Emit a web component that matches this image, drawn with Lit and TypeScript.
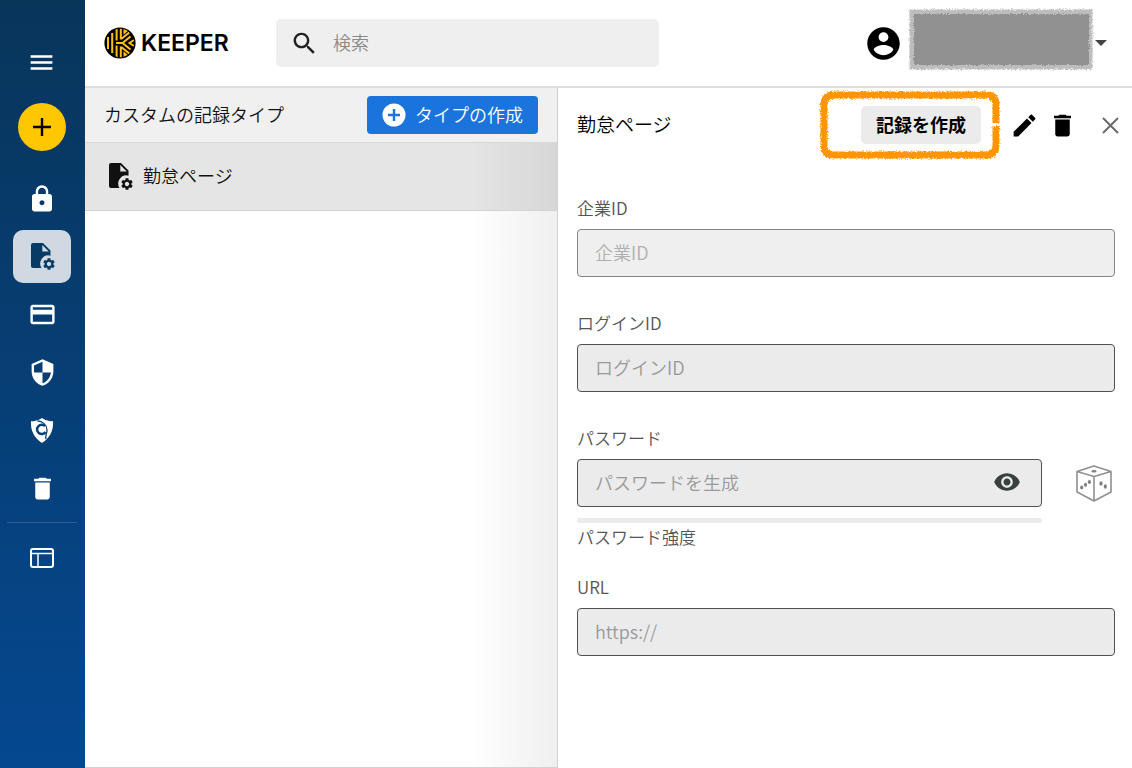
import { LitElement, html, svg, css } from "lit";
import { customElement } from "lit/decorators.js";

const P = {
  menu: "M3 18h18v-2H3v2zm0-5h18v-2H3v2zm0-7v2h18V6H3z",
  lock: "M18 8h-1V6c0-2.76-2.24-5-5-5S7 3.24 7 6v2H6c-1.1 0-2 .9-2 2v10c0 1.1.9 2 2 2h12c1.1 0 2-.9 2-2V10c0-1.1-.9-2-2-2zm-6 9c-1.1 0-2-.9-2-2s.9-2 2-2 2 .9 2 2-.9 2-2 2zm3.1-9H8.9V6c0-1.71 1.39-3.1 3.1-3.1 1.71 0 3.1 1.39 3.1 3.1v2z",
  card: "M20 4H4c-1.11 0-1.99.89-1.99 2L2 18c0 1.11.89 2 2 2h16c1.11 0 2-.89 2-2V6c0-1.11-.89-2-2-2zm0 14H4v-6h16v6zm0-10H4V6h16v2z",
  shield: "M12 1L3 5v6c0 5.55 3.84 10.74 9 12 5.16-1.26 9-6.45 9-12V5l-9-4zm0 10.99h7c-.53 4.12-3.28 7.79-7 8.94V12H5V6.3l7-3.11v8.8z",
  trash: "M6 19c0 1.1.9 2 2 2h8c1.1 0 2-.9 2-2V7H6v12zM19 4h-3.5l-1-1h-5l-1 1H5v2h14V4z",
  account: "M12 2C6.48 2 2 6.48 2 12s4.48 10 10 10 10-4.48 10-10S17.52 2 12 2zm0 3c1.66 0 3 1.34 3 3s-1.34 3-3 3-3-1.34-3-3 1.34-3 3-3zm0 14.2c-2.5 0-4.71-1.28-6-3.22.03-1.99 4-3.08 6-3.08 1.99 0 5.97 1.09 6 3.08-1.29 1.94-3.5 3.22-6 3.22z",
  search: "M15.5 14h-.79l-.28-.27C15.41 12.59 16 11.11 16 9.5 16 5.91 13.09 3 9.5 3S3 5.91 3 9.5 5.91 16 9.5 16c1.61 0 3.09-.59 4.23-1.57l.27.28v.79l5 4.99L20.49 19l-4.99-5zm-6 0C7.01 14 5 11.99 5 9.5S7.01 5 9.5 5 14 7.01 14 9.5 11.99 14 9.5 14z",
  edit: "M3 17.25V21h3.75L17.81 9.94l-3.75-3.75L3 17.25zM20.71 7.04c.39-.39.39-1.02 0-1.41l-2.34-2.34c-.39-.39-1.02-.39-1.41 0l-1.83 1.83 3.75 3.75 1.83-1.83z",
  eye: "M12 4.5C7 4.5 2.73 7.61 1 12c1.73 4.39 6 7.5 11 7.5s9.27-3.11 11-7.5c-1.73-4.39-6-7.5-11-7.5zM12 17c-2.76 0-5-2.24-5-5s2.24-5 5-5 5 2.24 5 5-2.24 5-5 5zm0-8c-1.66 0-3 1.34-3 3s1.34 3 3 3 3-1.34 3-3-1.34-3-3-3z",
  gear: "M19.14 12.94c.04-.3.06-.61.06-.94 0-.32-.02-.64-.07-.94l2.03-1.58c.18-.14.23-.41.12-.61l-1.92-3.32c-.12-.22-.37-.29-.59-.22l-2.39.96c-.5-.38-1.03-.7-1.62-.94l-.36-2.54c-.04-.24-.24-.41-.48-.41h-3.84c-.24 0-.43.17-.47.41l-.36 2.54c-.59.24-1.13.57-1.62.94l-2.39-.96c-.22-.08-.47 0-.59.22L2.74 8.87c-.12.21-.08.47.12.61l2.03 1.58c-.05.3-.09.63-.09.94s.02.64.07.94l-2.03 1.58c-.18.14-.23.41-.12.61l1.92 3.32c.12.22.37.29.59.22l2.39-.96c.5.38 1.03.7 1.62.94l.36 2.54c.05.24.24.41.48.41h3.84c.24 0 .44-.17.47-.41l.36-2.54c.59-.24 1.13-.56 1.62-.94l2.39.96c.22.08.47 0 .59-.22l1.92-3.32c.12-.22.07-.47-.12-.61l-2.01-1.58zM12 15.6c-1.98 0-3.6-1.62-3.6-3.6s1.62-3.6 3.6-3.6 3.6 1.62 3.6 3.6-1.62 3.6-3.6 3.6z",
};

const icon = (d: string, size = 29) =>
  html`<svg width=${size} height=${size} viewBox="0 0 24 24" fill="currentColor" aria-hidden="true"><path d=${d} /></svg>`;

const fileGear = html`<svg width="25" height="27" viewBox="0 0 25 27" fill="currentColor" aria-hidden="true">
  <path fill-rule="evenodd" d="M2 0h10l7.500 7.500v5.200A8.200 8.200 0 0 0 10.500 25H2a2 2 0 0 1-2-2V2a2 2 0 0 1 2-2zM11.300 2v6.500h6.500z" />
  <g transform="translate(10.8 13.8) scale(.6)"><path d=${P.gear} /></g>
</svg>`;

const breach = html`<svg width="24" height="26" viewBox="0 0 24 26" aria-hidden="true">
  <path fill="#fff" d="M1 3q6 1 11-3q5 4 11 3q1 14-11 22Q0 17 1 3z" />
  <g fill="none" stroke="#06407a">
    <path d="M15 8.200A4.600 4.600 0 1 0 15.500 14" stroke-width="2.400" />
    <path d="M7.500 3c5 0 9.500 4 9.500 9c0 4-2 5-1 9" stroke-width="1.300" />
  </g>
</svg>`;

const layoutIcon = html`<svg width="24" height="20" viewBox="0 0 24 20" fill="none" stroke="#fff" stroke-width="2" aria-hidden="true">
  <rect x="1" y="1" width="22" height="18" rx="2" /><path d="M1 5.500h22M8 6v13" stroke-width="1.500" />
</svg>`;

const emblem = html`<svg class="emblem" width="32" height="32" viewBox="0 0 32 32" aria-hidden="true">
  <defs><clipPath id="disc"><circle cx="16" cy="16" r="14.200" /></clipPath></defs>
  <circle cx="16" cy="16" r="15.600" fill="#000" />
  <g clip-path="url(#disc)" fill="none" stroke="#ffc20e" stroke-width="2">
    <path d="M4 10v12M8.200 6v20" />
    <path d="M12.600 1v12.500M12.600 18.500v12.500M12 16h6.500l8-6.500M18.500 16l8 6.500" />
    <path d="M16.800 1v10.500h1l7.500-6M16.800 31v-10.500h1l7.500 6" />
    <path d="M20.500 1v4.500l3-2.500M20.500 31v-4.500l3 2.500M30 13l-4.500 3l4.500 3" />
  </g>
</svg>`;

const dice = html`<svg width="36" height="37" viewBox="0 0 36 37" fill="none" stroke="#909090" stroke-width="1.600" stroke-linejoin="round" aria-hidden="true">
  <path d="M18 1L35 6.500V27L18 36L1 27V6.500zM1 6.500L18 11.500L35 6.500M18 11.500V36" />
  <g fill="#808080" stroke="none">
    <ellipse cx="18" cy="6.200" rx="2.600" ry="1.200" />
    <ellipse cx="5.700" cy="22.500" rx="1.600" ry="2.100" /><ellipse cx="9.500" cy="19.800" rx="1.600" ry="2.100" /><ellipse cx="13.400" cy="17" rx="1.600" ry="2.100" />
    <ellipse cx="25" cy="18.500" rx="1.600" ry="2.200" /><ellipse cx="29.300" cy="21.500" rx="1.600" ry="2.200" />
  </g>
</svg>`;

const chalk = (id: string) => svg`<filter id=${id} x="-5%" y="-10%" width="110%" height="120%">
  <feTurbulence type="fractalNoise" baseFrequency="0.6" numOctaves="2" seed="4" />
  <feDisplacementMap in="SourceGraphic" scale="4" xChannelSelector="R" yChannelSelector="G" />
</filter>`;

@customElement("app-root")
export class AppRoot extends LitElement {
  static styles = css`
    :host {
      display: flex;
      min-height: 100vh;
      background: #fff;
      color: #111;
      font: 350 18px/24px "Noto Sans CJK JP", sans-serif;
    }
    * { box-sizing: border-box; }
    svg { display: block; flex: none; }
    button, input { font: inherit; color: inherit; margin: 0; }
    button { border: 0; padding: 0; background: none; cursor: pointer; display: flex; align-items: center; justify-content: center; }
    nav {
      flex: none;
      width: 85px;
      padding: 38px 1px 0 0;
      color: #fff;
      background: linear-gradient(#08355a, #054890);
      display: flex;
      flex-direction: column;
      align-items: center;
    }
    .menu { width: 48px; height: 48px; padding-right: 2px; }
    .add { width: 48px; height: 48px; margin: 17px 0 21px; border-radius: 50%; background: #ffc700; }
    .links { display: flex; flex-direction: column; gap: 5px; width: 58px; }
    .links a { height: 53px; border-radius: 10px; color: #fff; display: flex; align-items: center; justify-content: center; }
    .links a.active { background: #d0d8e2; color: #083a66; padding-left: 2px; }
    .rule { width: 70px; height: 1px; margin: 7px 0 8px; border: 0; background: #2d5f96; }
    .page { flex: 1; min-width: 0; display: flex; flex-direction: column; }
    header {
      height: 88px;
      border-bottom: 2px solid #dedede;
      padding: 0 25px 0 19px;
      display: flex;
      align-items: center;
    }
    .brand { display: flex; align-items: center; width: 172px; color: #000; text-decoration: none; font: 600 23px/32px Inter, sans-serif; gap: 5px; }
    .search { flex: 0 1 383px; height: 48px; border-radius: 5px; background: #efefef; display: flex; align-items: center; padding-left: 14px; gap: 14px; color: #222; }
    .search input { flex: 1; min-width: 0; border: 0; background: none; padding: 0 0 2px; outline: 0; }
    .search input::placeholder { color: #8a8a8a; opacity: 1; }
    .account { margin-left: auto; display: flex; align-items: center; color: #000; }
    .masked { margin: -8px 1px 0 5px; }
    main { flex: 1; display: flex; }
    .list { width: 473px; flex: none; border-right: 1px solid #d2d2d2; border-bottom: 1px solid #d2d2d2; display: flex; flex-direction: column; }
    .listhead { height: 55px; background: #f0f0f0; border-bottom: 1px solid #d8d8d8; display: flex; align-items: center; justify-content: space-between; padding: 0 19px; }
    h1, h2 { margin: 0; font-weight: 350; font-size: 18px; line-height: 24px; }
    h1, h2, .text { padding-bottom: 3px; }
    h2 { font-size: 19px; color: #000; }
    .create { height: 38px; padding: 0 15px; gap: 9px; border-radius: 4px; background: #1b74dc; color: #fff; }
    .types { flex: 1; background: linear-gradient(to left, #00000010, #0000 88px); }
    .type { width: 100%; height: 68px; border-bottom: 1px solid #d2d2d2; background: #0000001a; justify-content: flex-start; padding-left: 24px; gap: 9px; }
    .detail { flex: 1; min-width: 0; padding: 18px 17px 0 19px; }
    .bar { display: flex; align-items: center; height: 38px; margin: 0 -8px 52px 0; color: #000; }
    .bar h2 { flex: 1; }
    .callout { position: relative; }
    .ring { position: absolute; left: -43px; top: -18px; pointer-events: none; }
    .record { height: 38px; width: 120px; border-radius: 5px; background: #ebebeb; color: #000; font-weight: 700; }
    .edit { margin-left: 29px; }
    .remove { margin-left: 9px; }
    .close { margin-left: 21px; width: 25px; height: 25px; }
    .field { margin-bottom: 34px; color: #555; }
    .field label { display: block; font-size: 17px; margin-bottom: 9px; }
    .strong { margin-bottom: 26px; }
    .box { width: 100%; height: 48px; border: 1px solid #505050; border-radius: 4px; background: #ebebeb; padding: 0 17px 2px; display: flex; align-items: center; }
    input.box { display: block; }
    .box:focus { outline: 0; }
    ::placeholder { color: #999; opacity: 1; }
    .soft { background: #efefef; border-color: #858585; }
    .soft::placeholder { color: #b0b0b0; }
    .pw { display: flex; align-items: center; gap: 34px; padding-right: 3px; }
    .pwmain { flex: 1; min-width: 0; }
    .pw .box { padding-right: 20px; }
    .pw input { flex: 1; min-width: 0; border: 0; padding: 0; background: none; outline: 0; }
    .pw .show { color: #37413f; }
    .meter { height: 5px; border-radius: 3px; background: #ebebeb; margin: 11px 73px 2px 0; }
    .hint { font-size: 17px; line-height: 24px; }
  `;

  render() {
    return html`
      <nav aria-label="メイン">
        <button class="menu" aria-label="メニュー">${icon(P.menu)}</button>
        <button class="add" aria-label="新規作成">
          <svg width="18" height="18" viewBox="0 0 18 18" stroke="#000" stroke-width="2.4"><path d="M9 0v18M0 9h18" /></svg>
        </button>
        <div class="links">
          <a href="#vault" aria-label="ボルト">${icon(P.lock, 30)}</a>
          <a href="#types" class="active" aria-label="カスタムの記録タイプ">${fileGear}</a>
          <a href="#cards" aria-label="カード">${icon(P.card)}</a>
          <a href="#audit" aria-label="セキュリティ監査">${icon(P.shield)}</a>
          <a href="#breach" aria-label="BreachWatch">${breach}</a>
          <a href="#trash" aria-label="ごみ箱">${icon(P.trash)}</a>
        </div>
        <hr class="rule" />
        <div class="links"><a href="#admin" aria-label="管理">${layoutIcon}</a></div>
      </nav>
      <div class="page">
        <header>
          <a class="brand" href="#home">${emblem}<span>KEEPER</span></a>
          <div class="search">${icon(P.search)}<input type="search" placeholder="検索" aria-label="検索" /></div>
          <button class="account" aria-label="アカウント">
            ${icon(P.account, 39)}
            <svg class="masked" width="186" height="63" viewBox="0 0 186 63">
              ${chalk("chalk-grey")}
              <g filter="url(#chalk-grey)">
                <rect x="1.500" y="1.500" width="183" height="60" fill="#bdbdbd" />
                <rect x="6" y="6" width="175" height="51" fill="#919191" />
              </g>
            </svg>
            <svg width="12" height="6" viewBox="0 0 12 6" fill="#444"><path d="M0 0h12L6 6z" /></svg>
          </button>
        </header>
        <main>
          <section class="list">
            <div class="listhead">
              <h1>カスタムの記録タイプ</h1>
              <button class="create">
                <svg width="24" height="24" viewBox="0 0 24 24"><circle cx="12" cy="12" r="11.500" fill="#fff" /><path d="M12 6v12M6 12h12" stroke="#1b74dc" stroke-width="2.400" /></svg>
                <span class="text">タイプの作成</span>
              </button>
            </div>
            <div class="types"><button class="type">${fileGear}<span class="text">勤怠ページ</span></button></div>
          </section>
          <section class="detail">
            <div class="bar">
              <h2>勤怠ページ</h2>
              <div class="callout">
                <button class="record"><span class="text">記録を作成</span></button>
                <svg class="ring" width="184" height="74" viewBox="0 0 184 74" aria-hidden="true">
                  ${chalk("chalk-orange")}
                  <g filter="url(#chalk-orange)">
                    <path d="M178 38V57Q178 67 168 67H16Q6 67 6 57V17Q6 7 16 7H168Q178 7 178 17V35" fill="none" stroke="#ff9500" stroke-width="7" />
                  </g>
                </svg>
              </div>
              <button class="edit" aria-label="編集">${icon(P.edit)}</button>
              <button class="remove" aria-label="削除">${icon(P.trash)}</button>
              <button class="close" aria-label="閉じる">
                <svg width="17" height="17" viewBox="0 0 17 17" stroke="#6b6b6b" stroke-width="2"><path d="M1 1l15 15M16 1L1 16" /></svg>
              </button>
            </div>
            <div class="field">
              <label for="company">企業ID</label>
              <input id="company" class="box soft" placeholder="企業ID" />
            </div>
            <div class="field">
              <label for="login">ログインID</label>
              <input id="login" class="box" placeholder="ログインID" />
            </div>
            <div class="field strong">
              <label for="password">パスワード</label>
              <div class="pw">
                <div class="pwmain box">
                  <input id="password" type="password" placeholder="パスワードを生成" />
                  <button class="show" aria-label="表示">${icon(P.eye, 28)}</button>
                </div>
                <button aria-label="生成">${dice}</button>
              </div>
              <div class="meter"></div>
              <div class="hint">パスワード強度</div>
            </div>
            <div class="field">
              <label for="url">URL</label>
              <input id="url" class="box" placeholder="https://" />
            </div>
          </section>
        </main>
      </div>
    `;
  }
}
